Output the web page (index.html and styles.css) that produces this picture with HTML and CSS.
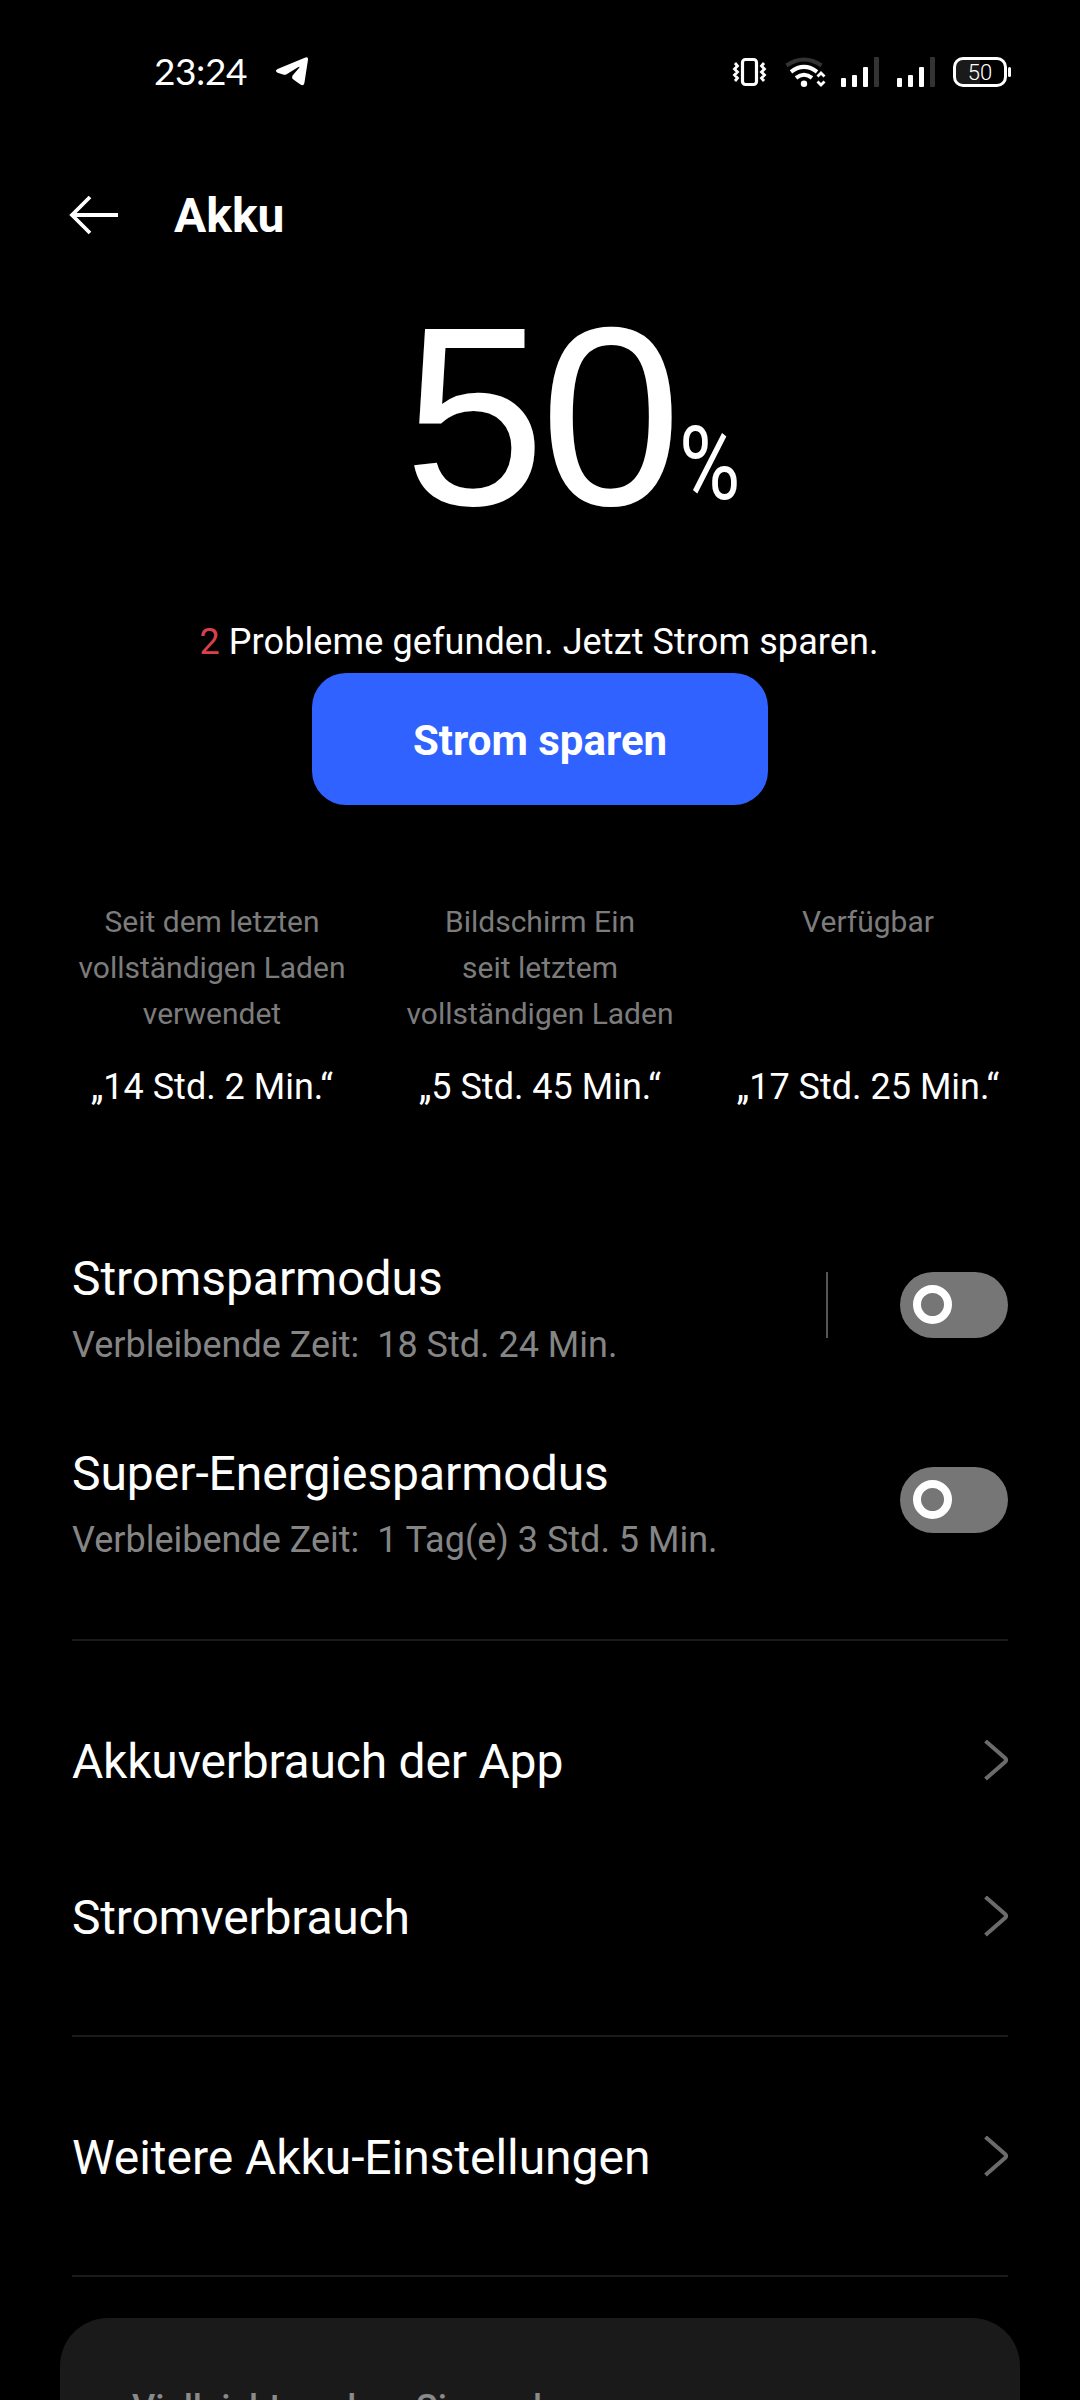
FILE: index.html
```html
<!DOCTYPE html>
<html lang="de">
<head>
    <meta charset="UTF-8">
    <meta name="viewport" content="width=device-width, initial-scale=1.0">
    <title>Akku</title>
    <link rel="stylesheet" href="styles.css">
</head>
<body>
    <div class="status-bar">
        <span class="clock">23:24</span>
        <svg class="telegram" width="34" height="30" viewBox="0 0 34 30">
            <path d="M2.6 12 L30.4 .6 Q33.4 -.4 33 2.8 L29.4 26 Q28.6 29.6 25.4 27.6 L18.4 22.6 Q16 20.4 18 18 L24 11 Q25.4 9 23 10.2 L11.6 17.2 Q10 18.2 8 17.6 L2.6 15.8 Q-.8 13.8 2.6 12 Z"/>
        </svg>
        <svg class="status-icons" width="282" height="32" viewBox="0 0 282 32">
            <!-- vibration -->
            <g fill="none" stroke="#fff">
                <rect x="10.5" y="2.5" width="14" height="25" rx="3" stroke-width="3.2"/>
                <path d="M3 6 L5.5 9 L2.5 12 L5.5 15 L2.5 18 L5.5 21 L3 24 M32 6 L29.5 9 L32.5 12 L29.5 15 L32.5 18 L29.5 21 L32 24" stroke-width="2.8"/>
            </g>
            <!-- wifi -->
            <g fill="none" stroke-width="4">
                <path d="M54.5 8.5 Q72 -3.5 89.5 8.5" stroke="#333"/>
                <path d="M59 14.8 Q72 5 85 14.8" stroke="#fff"/>
                <path d="M64 20.8 Q72 14.6 80 20.8" stroke="#fff"/>
                <path d="M85.5 19.5 L89 16 L92.5 19.5 M85.5 24.5 L89 28 L92.5 24.5" stroke="#fff" stroke-width="2.8"/>
            </g>
            <circle cx="72" cy="26.8" r="3.2" fill="#fff"/>
            <!-- signal -->
            <g fill="#fff">
                <rect x="109" y="21" width="5" height="9" rx="1"/>
                <rect x="120" y="18" width="5" height="12" rx="1"/>
                <rect x="131" y="10" width="5" height="20" rx="1"/>
                <rect x="142" y="0" width="5" height="30" rx="1" fill="#333"/>
                <rect x="165" y="21" width="5" height="9" rx="1"/>
                <rect x="176" y="18" width="5" height="12" rx="1"/>
                <rect x="187" y="10" width="5" height="20" rx="1"/>
                <rect x="198" y="0" width="5" height="30" rx="1" fill="#333"/>
            </g>
            <!-- battery -->
            <path d="M248 2 H230 Q223 2 223 9 V21 Q223 28 230 28 H248 Z" fill="#1a1a1a"/>
            <rect x="222.5" y="1.5" width="51" height="27" rx="8.5" fill="none" stroke="#fff" stroke-width="3"/>
            <rect x="276" y="10" width="3" height="10" rx="1.5" fill="#fff"/>
            <text class="battery-text" x="248" y="22.5" text-anchor="middle">50</text>
        </svg>
    </div>

    <header class="header">
        <svg width="50" height="42" viewBox="0 0 50 42">
            <path d="M21 2 L3 20 L21 38 M3 20 H49" fill="none" stroke="#fff" stroke-width="3.8"/>
        </svg>
        <h1>Akku</h1>
    </header>

    <section class="level">
        <span class="level-value">50</span><span class="level-unit">%</span>
    </section>

    <p class="problems"><span class="count">2</span> Probleme gefunden. Jetzt Strom sparen.</p>
    <button class="save-button">Strom sparen</button>

    <section class="stats">
        <div class="stat">
            <div class="stat-label">Seit dem letzten<br>vollständigen Laden<br>verwendet</div>
            <div class="stat-value">„14 Std. 2 Min.“</div>
        </div>
        <div class="stat">
            <div class="stat-label">Bildschirm Ein<br>seit letztem<br>vollständigen Laden</div>
            <div class="stat-value">„5 Std. 45 Min.“</div>
        </div>
        <div class="stat">
            <div class="stat-label">Verfügbar</div>
            <div class="stat-value">„17 Std. 25 Min.“</div>
        </div>
    </section>

    <section class="group modes">
        <div class="mode">
            <div class="mode-text">
                <div class="title">Stromsparmodus</div>
                <div class="subtitle">Verbleibende Zeit:&nbsp; 18 Std. 24 Min.</div>
            </div>
            <div class="separator"></div>
            <div class="toggle"><div class="knob"></div></div>
        </div>
        <div class="mode">
            <div class="mode-text">
                <div class="title">Super-Energiesparmodus</div>
                <div class="subtitle">Verbleibende Zeit:&nbsp; 1 Tag(e) 3 Std. 5 Min.</div>
            </div>
            <div class="toggle"><div class="knob"></div></div>
        </div>
    </section>

    <section class="group links">
        <div class="link">
            <div class="title">Akkuverbrauch der App</div>
            <svg class="chevron" width="26" height="42" viewBox="0 0 26 42"><path d="M3.5 1 L23 18 Q25 20 23 22 L3.5 39"/></svg>
        </div>
        <div class="link">
            <div class="title">Stromverbrauch</div>
            <svg class="chevron" width="26" height="42" viewBox="0 0 26 42"><path d="M3.5 1 L23 18 Q25 20 23 22 L3.5 39"/></svg>
        </div>
    </section>

    <section class="group links">
        <div class="link">
            <div class="title">Weitere Akku-Einstellungen</div>
            <svg class="chevron" width="26" height="42" viewBox="0 0 26 42"><path d="M3.5 1 L23 18 Q25 20 23 22 L3.5 39"/></svg>
        </div>
    </section>

    <section class="suggestions">
        <div class="suggestions-title">Vielleicht suchen Sie nach:</div>
    </section>
</body>
</html>
```

FILE: styles.css
```css
* {
    box-sizing: border-box;
}
body {
    margin: 0;
    width: 1080px;
    height: 2400px;
    overflow: hidden;
    display: flex;
    flex-direction: column;
    background: #000;
    color: #fff;
    font-family: Roboto, sans-serif;
}
.status-bar {
    display: flex;
    height: 144px;
    flex-shrink: 0;
    padding: 57px 66px 0 154px;
}
.clock {
    font-family: Lato, sans-serif;
    font-size: 37px;
    line-height: 28px;
    letter-spacing: -0.4px;
    width: 121px;
}
.telegram {
    fill: #fff;
}
.status-icons {
    margin-left: auto;
}
.battery-text {
    font-size: 22px;
    font-weight: 300;
    fill: #fff;
}
.header {
    display: flex;
    align-items: center;
    gap: 55px;
    height: 144px;
    flex-shrink: 0;
    padding: 0 69px 0 69px;
}
h1 {
    margin: 0 0 2px;
    font-size: 48px;
    font-weight: 700;
}
.level {
    display: flex;
    align-items: baseline;
    height: 318px;
    flex-shrink: 0;
    padding: 1px 0 0 404px;
}
.level-value {
    font-family: "Liberation Sans", Arial, sans-serif;
    font-size: 254px;
    line-height: 256px;
    letter-spacing: -5px;
}
.level-unit {
    font-size: 102px;
    font-weight: 400;
    width: 62px;
    transform: translate(2px, -6px) scaleX(0.82);
    transform-origin: left;
}
.problems {
    margin: 0;
    height: 67px;
    flex-shrink: 0;
    padding: 15px 2px 0 0;
    font-size: 36px;
    line-height: 42px;
    letter-spacing: 0.1px;
    text-align: center;
}
.count {
    color: #d9404b;
}
.save-button {
    align-self: center;
    width: 456px;
    height: 132px;
    flex-shrink: 0;
    border: none;
    border-radius: 34px;
    padding-top: 3px;
    background: #3062ff;
    color: #fff;
    font-family: inherit;
    font-size: 42px;
    font-weight: 700;
}
.stats {
    display: grid;
    grid-template-columns: repeat(3, 1fr);
    height: 402px;
    flex-shrink: 0;
    padding: 94px 48px 0;
    text-align: center;
}
.stat-label {
    height: 167px;
    color: #7c7c7c;
    font-size: 30px;
    line-height: 46px;
}
.stat-value {
    font-size: 36px;
    line-height: 42px;
}
.group {
    flex-shrink: 0;
    margin: 0 72px;
    border-bottom: 2px solid #1a1a1a;
}
.modes {
    height: 434px;
}
.mode {
    display: flex;
    align-items: center;
    height: 195px;
}
.mode-text {
    flex: 1;
    padding-top: 7px;
}
.title {
    font-size: 48px;
    line-height: 56px;
    letter-spacing: -0.05px;
}
.subtitle {
    margin-top: 17px;
    color: #858585;
    font-size: 36px;
    line-height: 42px;
}
.separator {
    width: 2px;
    height: 66px;
    margin-right: 72px;
    background: #555;
}
.toggle {
    display: flex;
    align-items: center;
    width: 108px;
    height: 66px;
    padding-left: 13px;
    border-radius: 33px;
    background: #767676;
}
.knob {
    width: 39px;
    height: 39px;
    border: 8px solid #fff;
    border-radius: 50%;
}
.links {
    padding: 42px 0 40px;
}
.link {
    display: flex;
    align-items: center;
    justify-content: space-between;
    height: 156px;
}
.link .title {
    padding-top: 1px;
    letter-spacing: -0.2px;
}
.link:only-child .title {
    letter-spacing: -0.05px;
}
.chevron {
    fill: none;
    stroke: #6b6b6b;
    stroke-width: 4;
}
.suggestions {
    flex: 1;
    min-height: 0;
    overflow: hidden;
    margin: 41px 60px 0;
    padding: 69px 72px 0;
    border-radius: 48px 48px 0 0;
    background: #1a1a1a;
}
.suggestions-title {
    color: #8a8a8a;
    font-size: 36px;
    font-weight: 500;
    line-height: 42px;
}
```
